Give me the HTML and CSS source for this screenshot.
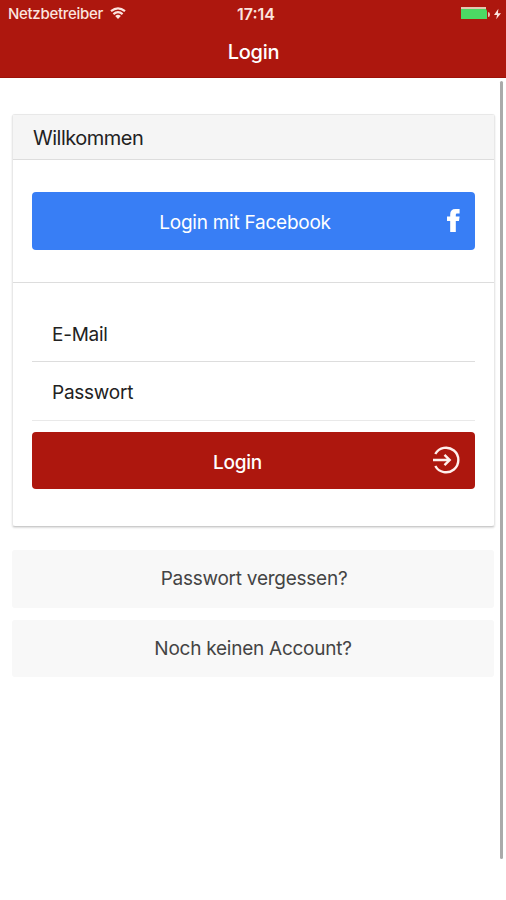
FILE: index.html
```html
<!DOCTYPE html>
<html lang="de">
<head>
<meta charset="utf-8">
<title>Login</title>
<link rel="stylesheet" href="styles.css">
</head>
<body>
<header class="navbar">
  <div class="status">
    <div class="carrier"><span>Netzbetreiber</span>
      <svg class="wifi" viewBox="0 0 16 12"><path d="M1 4.200Q8-1.400 15 4.200M3.400 7.200Q8 3.200 12.600 7.200" fill="none" stroke="currentColor" stroke-width="2.200"/><path d="M5.200 9Q8 6.600 10.800 9L8 12Z" fill="currentColor"/></svg>
    </div>
    <time class="clock">17:14</time>
    <div class="power">
      <svg class="battery" viewBox="0 0 30 14"><path d="M1 0H26V3H1Z" fill="#e5c6b0"/><path d="M1 2H26L27 4V12H1Z" fill="#4cd964"/><path d="M28 5q2 0 2 2.500t-2 2.500Z" fill="#ecc4b8"/></svg>
      <svg class="bolt" viewBox="0 0 8 12"><path d="M5 0 0 7H3.500L2.500 12 8 5H4.500Z" fill="currentColor"/></svg>
    </div>
  </div>
  <h1 class="title">Login</h1>
</header>
<main class="content">
  <section class="card">
    <h2 class="card-header">Willkommen</h2>
    <div class="social">
      <button class="button facebook"><span>Login mit Facebook</span>
        <svg class="icon-facebook" viewBox="0 0 13 23"><path d="M3.200 23V12H0V7.600H3.200V5.500Q3.200 0 8.400 0H12.600V4.500H10Q8.800 4.500 8.800 5.800V7.600H12.600L12 12H8.800V23Z" fill="currentColor"/></svg>
      </button>
    </div>
    <form class="form">
      <label class="field email">E-Mail</label>
      <label class="field password">Passwort</label>
      <button type="button" class="button login"><span>Login</span>
        <svg class="icon-login" viewBox="0 0 27 28"><path d="M2.300 8A12.300 12.300 0 1 1 2.300 20M0 14H16M11.500 8.800 16.700 14 11.500 19.200" fill="none" stroke="currentColor" stroke-width="2.400"/></svg>
      </button>
    </form>
  </section>
  <button class="button light forgot"><span>Passwort vergessen?</span></button>
  <button class="button light register"><span>Noch keinen Account?</span></button>
</main>
<div class="scrollbar"></div>
</body>
</html>
```
FILE: styles.css
```css
* { box-sizing: border-box; }
body {
  margin: 0;
  height: 900px;
  overflow: hidden;
  position: relative;
  background: #fff;
  color: #222;
  font: 400 19px/24px Inter, "Liberation Sans", sans-serif;
  letter-spacing: -.25px;
}
svg { display: block; flex: none; }
.navbar {
  height: 78px;
  background: #ad170e;
  border-bottom: 1px solid #9d1209;
  color: #fff;
}
.status {
  height: 27px;
  padding: 0 5px 0 8px;
  display: grid;
  grid-template-columns: 1fr auto 1fr;
  align-items: center;
  font-size: 15px;
  font-weight: 500;
  color: #fbe4df;
}
.carrier { display: flex; align-items: center; gap: 7px; letter-spacing: -.3px; }
.wifi { width: 16px; height: 12px; margin-top: -2px; }
.clock { padding-left: 3px; font-size: 16px; font-weight: 600; letter-spacing: 0; }
.power { display: flex; align-items: center; justify-content: flex-end; gap: 4px; }
.battery { width: 30px; height: 14px; }
.bolt { width: 7px; height: 12px; }
.title {
  margin: 0;
  padding: 12px 0 0 1px;
  text-align: center;
  font-size: 20px;
  font-weight: 500;
  line-height: 26px;
}
.content { padding: 36px 12px 0; }
.card {
  width: 483px;
  height: 413px;
  border: 1px solid #e8e8e8;
  border-bottom-color: #ccc;
  border-radius: 3px;
  box-shadow: 0 1px 2px rgba(0, 0, 0, .14);
}
.card-header {
  margin: 0;
  height: 45px;
  padding: 11px 20px 0;
  background: #f5f5f5;
  border-bottom: 1px solid #ddd;
  font-size: 20px;
  font-weight: 400;
  letter-spacing: -.5px;
}
.social {
  height: 123px;
  padding: 32px 19px 0;
  border-bottom: 1px solid #ddd;
}
.button {
  position: relative;
  display: flex;
  align-items: center;
  justify-content: center;
  width: 443px;
  height: 58px;
  padding: 0;
  border: 0;
  border-radius: 4px;
  color: #fff;
  font: inherit;
  letter-spacing: inherit;
}
.facebook { padding: 3px 17px 0 0; background: #387ef5; }
.icon-facebook { position: absolute; right: 15px; top: 17px; width: 13px; height: 23px; }
.form { padding: 20px 19px 0; }
.field {
  display: flex;
  align-items: center;
  height: 59px;
  padding-left: 20px;
  border-bottom: 1px solid #ddd;
}
.email { padding-top: 5px; }
.password { padding-top: 3px; border-color: #e9e9e9; }
.login {
  height: 57px;
  margin-top: 11px;
  padding: 4px 32px 0 0;
  background: #ad170e;
  font-weight: 500;
}
.icon-login { position: absolute; right: 15px; top: 14px; width: 27px; height: 28px; color: #fff0ed; }
.light { width: 482px; background: #f8f8f8; color: #444; border-radius: 3px; }
.forgot { margin-top: 23px; padding-left: 2px; }
.register { margin-top: 12px; height: 57px; }
.scrollbar {
  position: absolute;
  right: 3px;
  top: 81px;
  width: 3px;
  height: 778px;
  border-radius: 2px;
  background: #aaa;
}
```
